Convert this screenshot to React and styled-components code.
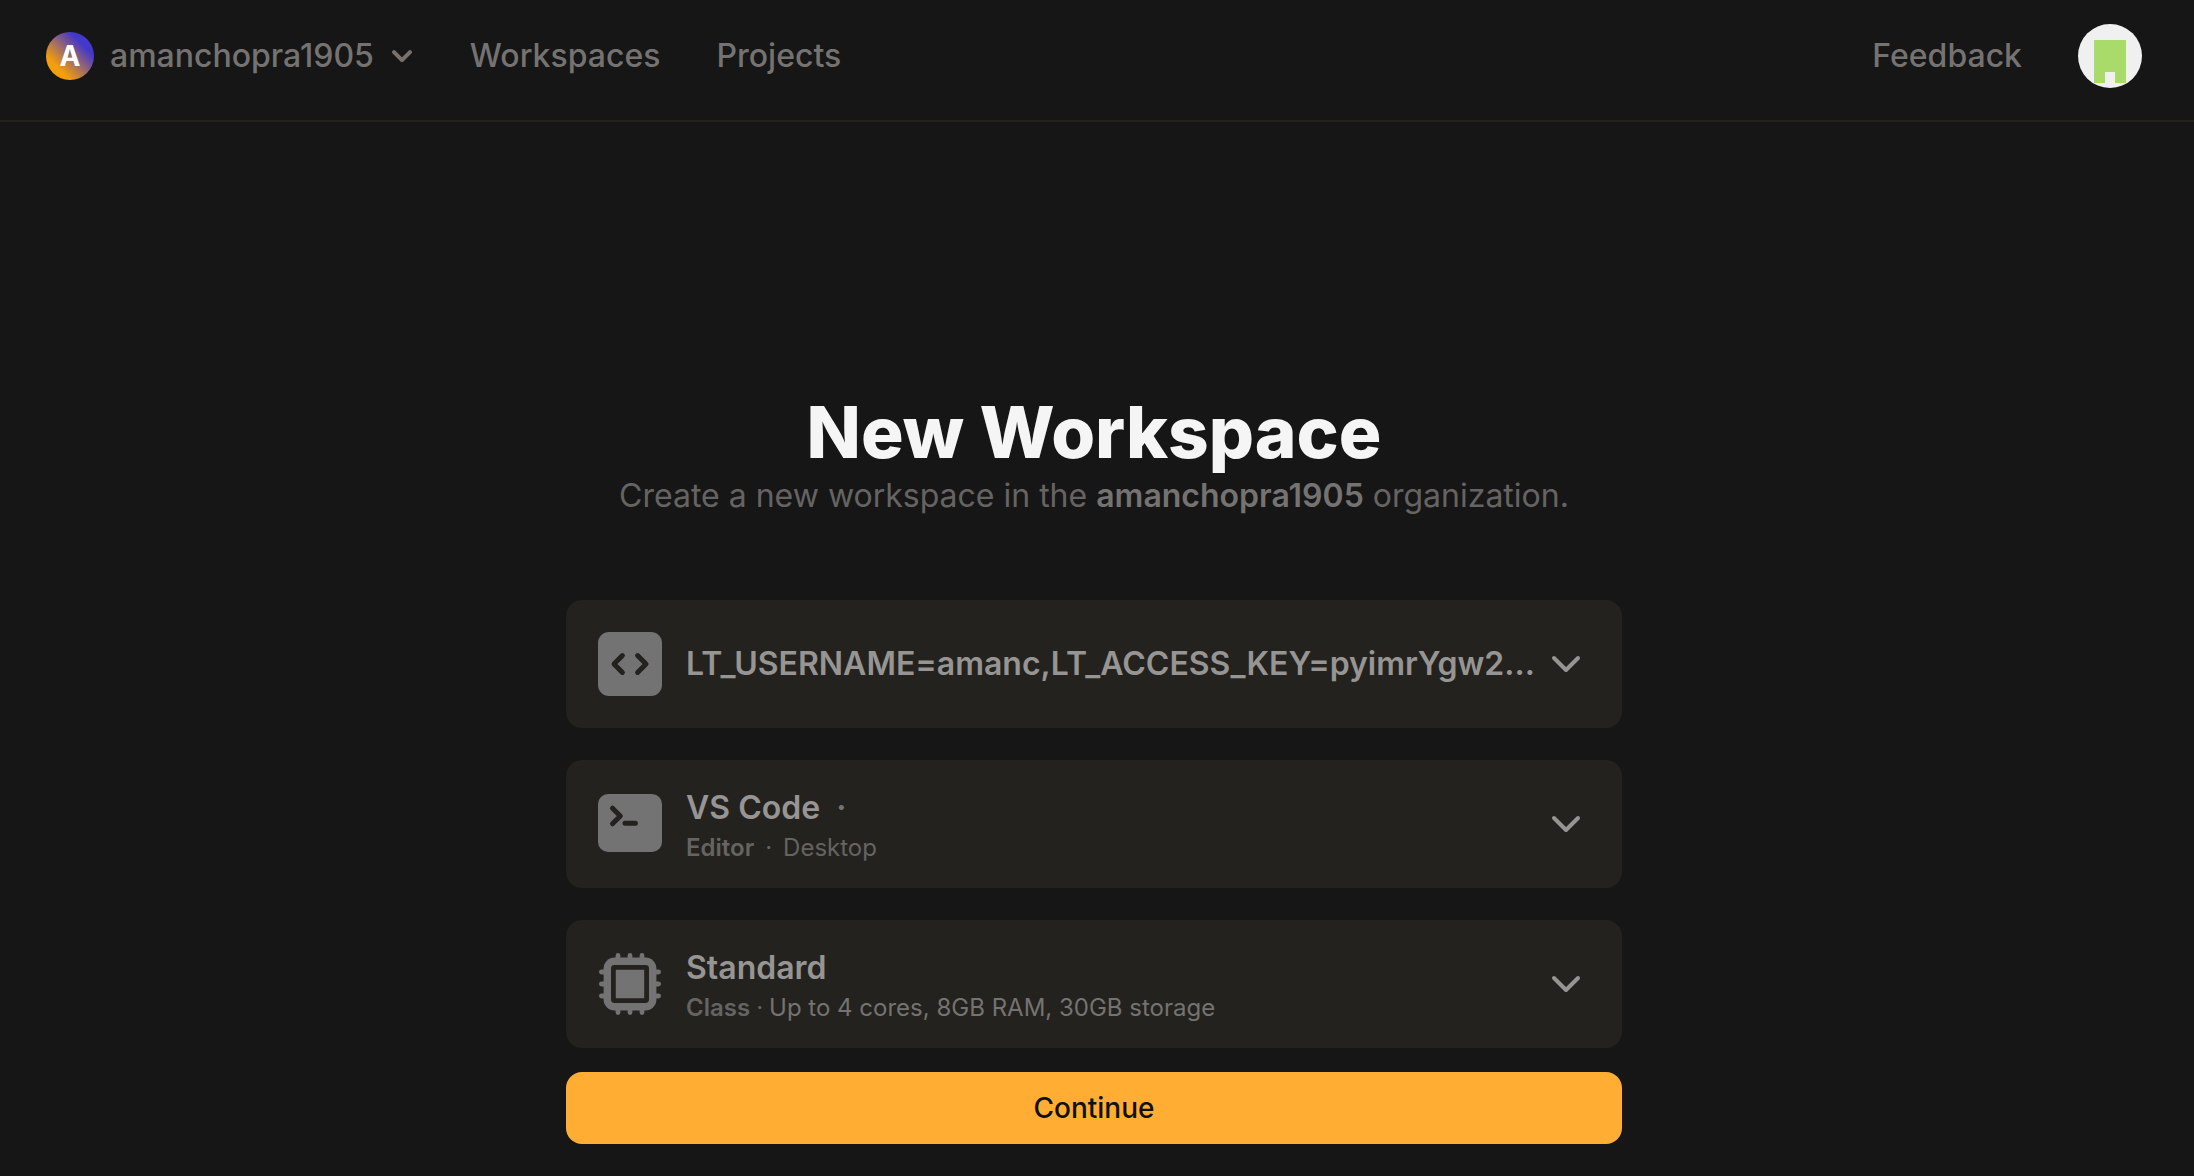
import React from "react";
import styled, { createGlobalStyle } from "styled-components";

const GlobalStyle = createGlobalStyle`
  *, *::before, *::after { box-sizing: border-box; }
  body {
    margin: 0;
    background: #161616;
    color: #757371;
    font-family: Inter, "Liberation Sans", sans-serif;
    font-size: 32px;
    line-height: 48px;
  }
  button { font: inherit; border: 0; cursor: pointer; }
`;

const Header = styled.header`
  display: flex;
  align-items: center;
  justify-content: space-between;
  padding: 24px 52px 32px 46px;
  border-bottom: 2px solid #23221e;
`;

const Nav = styled.nav`
  display: flex;
  align-items: center;
  gap: 56px;
  font-weight: 500;
`;

const OrgButton = styled.button`
  display: flex;
  align-items: center;
  gap: 16px;
  padding: 0;
  background: none;
  color: inherit;
`;

const OrgBadge = styled.span`
  display: grid;
  place-items: center;
  width: 48px;
  height: 48px;
  border-radius: 50%;
  background: linear-gradient(45deg, #f59e0b 25%, #4338ca 75%);
  color: #ffffff;
  font-size: 28px;
  font-weight: 700;
`;

const NavLink = styled.a`
  color: inherit;
  text-decoration: none;
`;

const AvatarButton = styled.button`
  display: block;
  width: 64px;
  height: 64px;
  padding: 0;
  border-radius: 50%;
  overflow: hidden;
  background: #f0f0f0;
  svg { display: block; }
`;

const Main = styled.main`
  display: flex;
  flex-direction: column;
  align-items: center;
  padding: 270px 38px 32px 32px;
`;

const Title = styled.h1`
  margin: 0;
  color: #f5f5f5;
  font-size: 71px;
  font-weight: 800;
  line-height: 80px;
`;

const Subtitle = styled.p`
  margin: 0 0 80px;
  color: #666462;
  text-align: center;
  strong { color: #757371; font-weight: 600; }
`;

const Form = styled.form`
  display: flex;
  flex-direction: column;
  gap: 24px;
  width: 100%;
  max-width: 1056px;
`;

const Options = styled.div`
  display: grid;
  grid-template-columns: minmax(0, 1fr);
  gap: 32px;
`;

const OptionCard = styled.button`
  display: flex;
  align-items: center;
  min-height: 128px;
  width: 100%;
  padding: 16px 32px;
  border-radius: 16px;
  background: #23221e;
  color: #979593;
  text-align: left;
  svg { flex: none; display: block; }
`;

const OptionText = styled.span`
  flex: 1;
  min-width: 0;
  margin: 0 4px 0 24px;
`;

const OptionTitle = styled.span`
  display: block;
  overflow: hidden;
  white-space: nowrap;
  text-overflow: ellipsis;
  font-weight: 600;
`;

const Dot = styled.span`
  margin-left: 8px;
  color: #757371;
`;

const OptionMeta = styled.span`
  display: flex;
  gap: ${(p) => p.$gap};
  color: ${(p) => p.$color};
  font-size: 24px;
  line-height: 32px;
  strong { color: #666462; font-weight: 600; }
  i { color: #666462; font-style: normal; }
`;

const ContinueButton = styled.button`
  height: 72px;
  border-radius: 16px;
  background: #ffae33;
  color: #12100c;
  font-size: 28px;
  font-weight: 500;
`;

const NavChevron = () => (
  <svg width="24" height="24" viewBox="0 0 24 24" fill="none" aria-hidden="true">
    <path d="M4 8.2l8 8 8-8" stroke="#78716c" strokeWidth="4" strokeLinecap="round" strokeLinejoin="round" />
  </svg>
);

const CardChevron = () => (
  <svg width="48" height="48" viewBox="0 0 48 48" fill="none" aria-hidden="true">
    <path d="M12 18l12 12 12-12" stroke="#979593" strokeWidth="4" strokeLinecap="round" strokeLinejoin="round" />
  </svg>
);

const CodeIcon = () => (
  <svg width="64" height="64" viewBox="0 0 64 64" fill="none" aria-hidden="true">
    <rect width="64" height="64" rx="11" fill="#737373" />
    <path d="M24.4 23.6L16 32l8.4 8.4M39.6 23.6L48 32l-8.4 8.4" stroke="#23221e" strokeWidth="5" strokeLinecap="round" strokeLinejoin="round" />
  </svg>
);

const TerminalIcon = () => (
  <svg width="64" height="60" viewBox="0 0 64 60" fill="none" aria-hidden="true">
    <rect width="64" height="58" rx="10" fill="#737373" />
    <path d="M14.5 14.2l7.8 7.8-7.8 7.8M27 29.3h10.4" stroke="#23221e" strokeWidth="5" strokeLinecap="round" strokeLinejoin="round" />
  </svg>
);

const ChipIcon = () => (
  <svg width="64" height="64" viewBox="0 0 64 64" fill="none" aria-hidden="true">
    <path d="M20 3.4v57.2M32 3.4v57.2M44 3.4v57.2M3.4 20h57.2M3.4 32h57.2M3.4 44h57.2" stroke="#737373" strokeWidth="4.8" strokeLinecap="round" />
    <rect x="5.6" y="5.6" width="52.8" height="52.8" rx="11" fill="#737373" />
    <rect x="15.4" y="15.4" width="33.2" height="33.2" rx="1" stroke="#23221e" strokeWidth="4.8" />
  </svg>
);

const AvatarArt = () => (
  <svg width="64" height="64" viewBox="0 0 64 64" aria-hidden="true">
    <path d="M16 16h32v43H37V48H27v11H16z" fill="#a8db69" />
  </svg>
);

export default function App() {
  return (
    <>
      <GlobalStyle />
      <Header>
        <Nav aria-label="Main">
          <OrgButton type="button" aria-haspopup="menu">
            <OrgBadge aria-hidden="true">A</OrgBadge>
            <span>amanchopra1905</span>
            <NavChevron />
          </OrgButton>
          <NavLink href="#workspaces">Workspaces</NavLink>
          <NavLink href="#projects">Projects</NavLink>
        </Nav>
        <Nav aria-label="Account">
          <NavLink href="#feedback">Feedback</NavLink>
          <AvatarButton type="button" aria-label="Account menu">
            <AvatarArt />
          </AvatarButton>
        </Nav>
      </Header>
      <Main>
        <Title>New Workspace</Title>
        <Subtitle>
          Create a new workspace in the <strong>amanchopra1905</strong> organization.
        </Subtitle>
        <Form onSubmit={(e) => e.preventDefault()}>
          <Options>
            <OptionCard type="button" aria-haspopup="listbox">
              <CodeIcon />
              <OptionText>
                <OptionTitle>LT_USERNAME=amanc,LT_ACCESS_KEY=pyimrYgw2...</OptionTitle>
              </OptionText>
              <CardChevron />
            </OptionCard>
            <OptionCard type="button" aria-haspopup="listbox">
              <TerminalIcon />
              <OptionText>
                <OptionTitle>
                  VS Code <Dot>·</Dot>
                </OptionTitle>
                <OptionMeta $gap="11px" $color="#666462">
                  <strong>Editor</strong>
                  <i>·</i>
                  <span>Desktop</span>
                </OptionMeta>
              </OptionText>
              <CardChevron />
            </OptionCard>
            <OptionCard type="button" aria-haspopup="listbox">
              <ChipIcon />
              <OptionText>
                <OptionTitle>Standard</OptionTitle>
                <OptionMeta $gap="6px" $color="#757371">
                  <strong>Class</strong>
                  <i>·</i>
                  <span>Up to 4 cores, 8GB RAM, 30GB storage</span>
                </OptionMeta>
              </OptionText>
              <CardChevron />
            </OptionCard>
          </Options>
          <ContinueButton type="submit">Continue</ContinueButton>
        </Form>
      </Main>
    </>
  );
}
